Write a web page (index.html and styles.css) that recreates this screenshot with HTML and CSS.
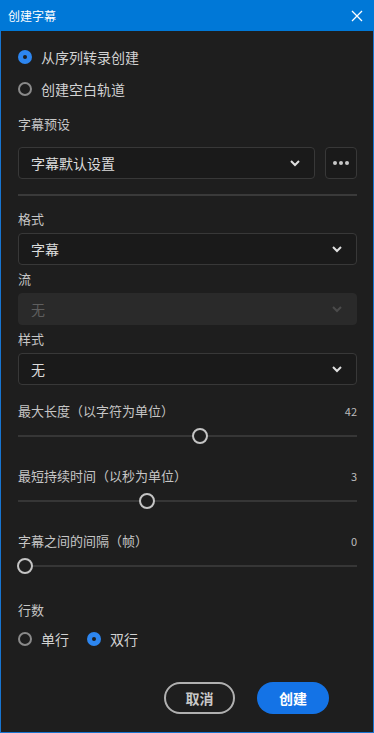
FILE: index.html
```html
<!DOCTYPE html>
<html lang="zh">
<head>
<meta charset="utf-8">
<link rel="stylesheet" href="styles.css">
</head>
<body>
<div class="window">
  <div class="titlebar">
    <span class="title">创建字幕</span>
    <svg class="close" width="12" height="12" viewBox="0 0 12 12"><path d="M1 1L11 11M11 1L1 11" stroke="#fff" stroke-width="1.3" fill="none"/></svg>
  </div>
  <div class="content">
    <div class="radio-row first">
      <span class="radio on"></span><span class="rlabel">从序列转录创建</span>
    </div>
    <div class="radio-row second">
      <span class="radio"></span><span class="rlabel">创建空白轨道</span>
    </div>

    <div class="label preset-label">字幕预设</div>
    <div class="preset-row">
      <div class="select grow"><span>字幕默认设置</span><svg class="chev" width="12" height="8" viewBox="0 0 12 8"><path d="M2 2L6 6L10 2" stroke="#e0e0e0" stroke-width="2" fill="none"/></svg></div>
      <div class="more"><span class="dot"></span><span class="dot"></span><span class="dot"></span></div>
    </div>
    <div class="divider"></div>

    <div class="label sec">格式</div>
    <div class="select field"><span>字幕</span><svg class="chev" width="12" height="8" viewBox="0 0 12 8"><path d="M2 2L6 6L10 2" stroke="#e0e0e0" stroke-width="2" fill="none"/></svg></div>
    <div class="label sub">流</div>
    <div class="select field disabled"><span>无</span><svg class="chev" width="12" height="8" viewBox="0 0 12 8"><path d="M2 2L6 6L10 2" stroke="#4a4a4a" stroke-width="2" fill="none"/></svg></div>
    <div class="label sub">样式</div>
    <div class="select field"><span>无</span><svg class="chev" width="12" height="8" viewBox="0 0 12 8"><path d="M2 2L6 6L10 2" stroke="#e0e0e0" stroke-width="2" fill="none"/></svg></div>

    <div class="label-row s1"><span class="label">最大长度（以字符为单位）</span><span class="value">42</span></div>
    <div class="slider"><div class="track"></div><div class="thumb" style="left:174px"></div></div>
    <div class="label-row s2"><span class="label">最短持续时间（以秒为单位）</span><span class="value">3</span></div>
    <div class="slider"><div class="track"></div><div class="thumb" style="left:121px"></div></div>
    <div class="label-row s2"><span class="label">字幕之间的间隔（帧）</span><span class="value">0</span></div>
    <div class="slider"><div class="track"></div><div class="thumb" style="left:-1px"></div></div>

    <div class="label lines-label">行数</div>
    <div class="radio-inline">
      <span class="radio"></span><span class="rlabel">单行</span>
      <span class="radio on second-radio"></span><span class="rlabel">双行</span>
    </div>

    <div class="buttons">
      <button class="btn cancel">取消</button>
      <button class="btn primary">创建</button>
    </div>
  </div>
</div>
</body>
</html>
```
FILE: styles.css
```css
* { box-sizing: border-box; }
html, body {
  margin: 0;
  padding: 0;
  background: #1e1e1e;
}
body {
  font-family: "Noto Sans CJK SC", "Noto Sans", sans-serif;
  color: #d0d0d0;
}
.window {
  width: 374px;
  height: 733px;
  display: flex;
  flex-direction: column;
  border: 1px solid #1874cf;
  border-top: none;
  background: #1e1e1e;
}
.titlebar {
  height: 31px;
  background: #0078d7;
  display: flex;
  align-items: center;
  justify-content: space-between;
  padding: 0 10px 0 8px;
  margin: 0 -1px;
}
.title {
  font-size: 12px;
  color: #fff;
  line-height: 1;
}
.close { display: block; margin-right: 1px; }
.content {
  flex: 1;
  display: flex;
  flex-direction: column;
  padding: 0 16px 0 9px;
  border-left: 8px solid #201d1b;
}
.radio-row {
  height: 24px;
  display: flex;
  align-items: center;
}
.radio-row.first { margin-top: 14px; }
.radio-row.second { margin-top: 8px; }
.radio {
  width: 14px;
  height: 14px;
  border-radius: 50%;
  border: 2px solid #8a8a8a;
  flex: none;
  position: relative;
}
.radio.on {
  border: none;
  background: #2d86f0;
}
.radio.on::after {
  content: "";
  position: absolute;
  left: 5px;
  top: 5px;
  width: 4px;
  height: 4px;
  border-radius: 50%;
  background: #1e1e1e;
}
.rlabel {
  font-size: 14px;
  color: #d2d2d2;
  margin-left: 9px;
  line-height: 20px;
}
.label {
  font-size: 13px;
  color: #c6c6c6;
  line-height: 20px;
  height: 20px;
}
.preset-label { margin-top: 13px; }
.preset-row {
  display: flex;
  gap: 10px;
  margin-top: 13px;
}
.select {
  height: 32px;
  border: 1px solid #383838;
  border-radius: 4px;
  background: #1a1a1a;
  display: flex;
  align-items: center;
  justify-content: space-between;
  padding: 0 13px 0 12px;
  font-size: 14px;
  color: #dcdcdc;
}
.select.grow { flex: 1; }
.select.disabled {
  background: #2a2a2a;
  border-color: #2a2a2a;
  color: #5e5e5e;
}
.chev { display: block; }
.more {
  width: 32px;
  height: 32px;
  border: 1px solid #383838;
  border-radius: 4px;
  background: #1a1a1a;
  display: flex;
  align-items: center;
  justify-content: center;
  gap: 2px;
}
.dot {
  width: 4px;
  height: 4px;
  border-radius: 50%;
  background: #c8c8c8;
}
.divider {
  height: 2px;
  background: #3a3a3a;
  margin-top: 15px;
}
.sec { margin-top: 13px; }
.sub { margin-top: 4px; }
.field { margin-top: 4px; }
.label-row {
  display: flex;
  justify-content: space-between;
  align-items: center;
  height: 20px;
}
.label-row.s1 { margin-top: 16px; }
.label-row.s2 { margin-top: 20px; }
.value {
  font-size: 11px;
  color: #bdbdbd;
  line-height: 20px;
}
.slider {
  position: relative;
  height: 20px;
  margin-top: 5px;
}
.track {
  position: absolute;
  left: 0;
  right: 0;
  top: 9px;
  height: 2px;
  background: #363636;
}
.thumb {
  position: absolute;
  top: 2px;
  width: 16px;
  height: 16px;
  border-radius: 50%;
  border: 2px solid #c4c4c4;
  background: #1e1e1e;
}
.lines-label { margin-top: 24px; }
.radio-inline {
  display: flex;
  align-items: center;
  height: 24px;
  margin-top: 7px;
}
.second-radio { margin-left: 18px; }
.buttons {
  display: flex;
  justify-content: flex-end;
  gap: 22px;
  margin-top: 31px;
  padding-right: 28px;
}
.btn {
  height: 32px;
  border-radius: 16px;
  font-family: inherit;
  font-size: 14px;
  font-weight: bold;
  padding: 0;
}
.cancel {
  width: 71px;
  background: transparent;
  border: 2px solid #b0b0b0;
  color: #c8c8c8;
}
.primary {
  width: 72px;
  background: #1473e6;
  border: none;
  color: #fff;
}
```
